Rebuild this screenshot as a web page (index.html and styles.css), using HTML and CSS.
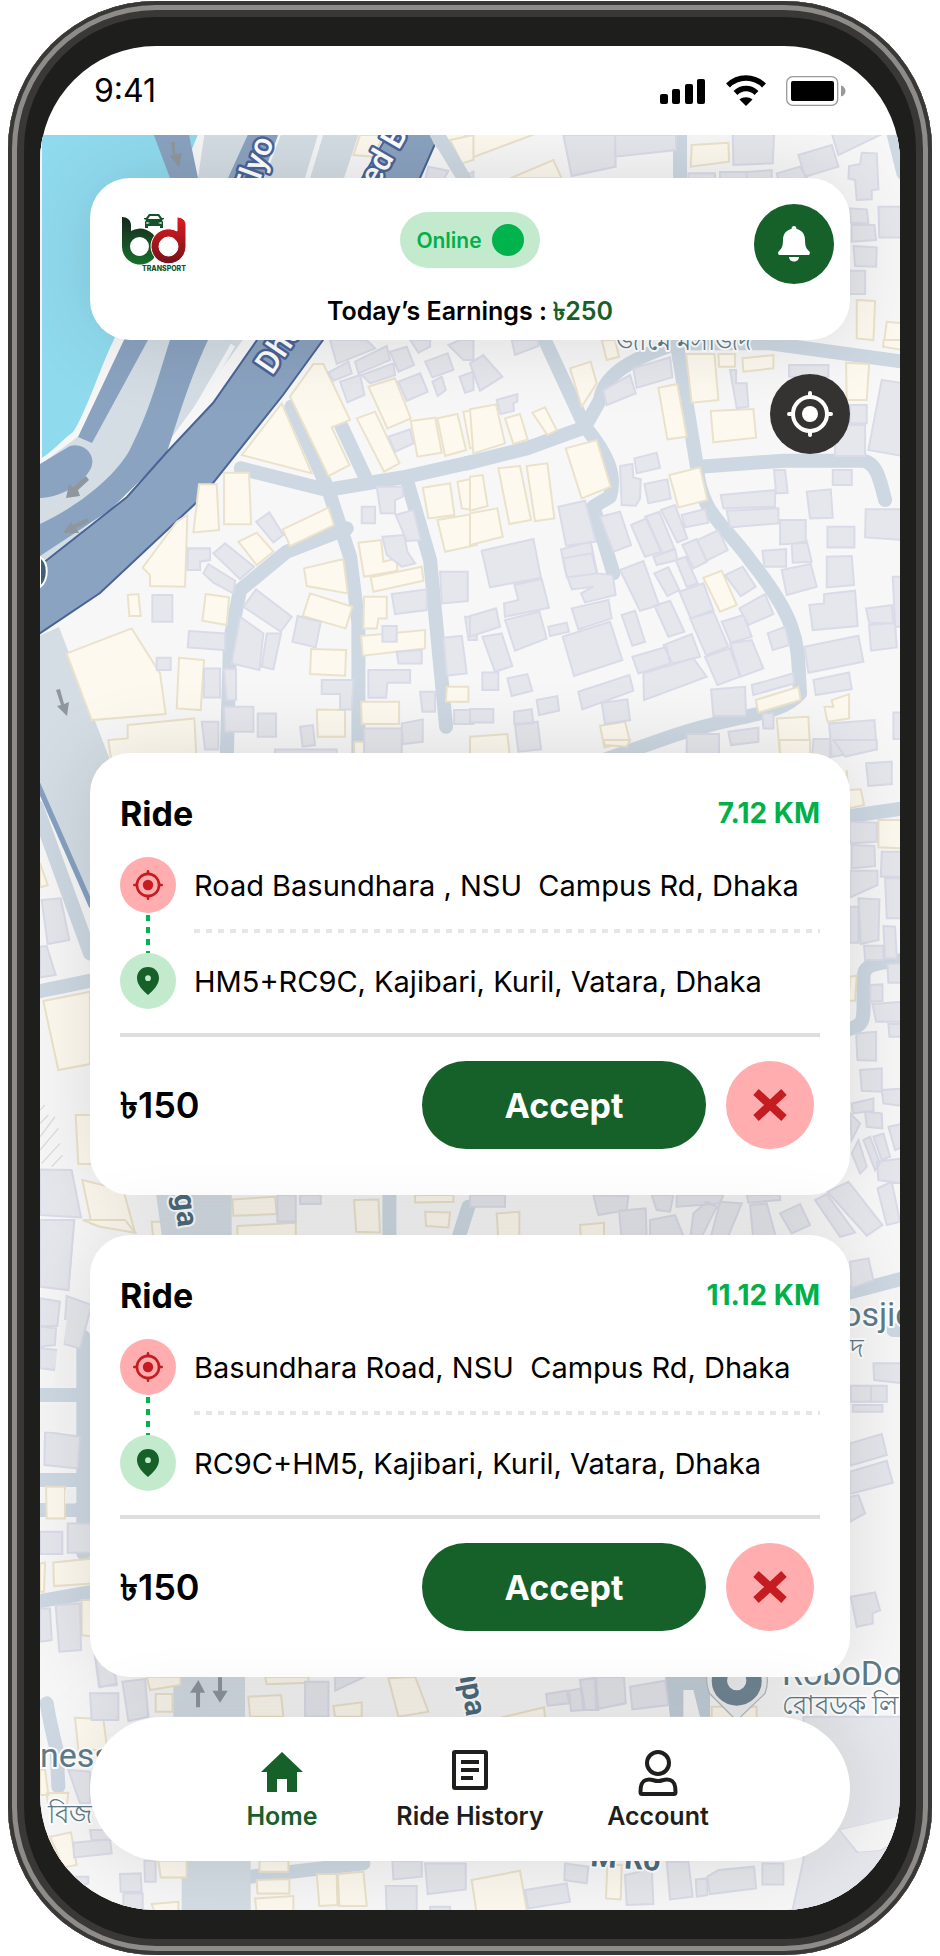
FILE: index.html
```html
<!DOCTYPE html>
<html lang="en">
<head>
    <meta charset="UTF-8">
    <meta name="viewport" content="width=device-width, initial-scale=1.0">
    <title>BD Transport</title>
    <link rel="stylesheet" href="styles.css">
</head>
<body>

<!-- shared icons -->
<svg class="sprite" aria-hidden="true">
    <symbol id="target" viewBox="0 0 46 46">
        <circle cx="23" cy="23" r="8" fill="currentColor"/>
        <circle cx="23" cy="23" r="17" fill="none" stroke="currentColor" stroke-width="4"/>
        <path d="M23 2V6M23 40V44M2 23H6M40 23H44" stroke="currentColor" stroke-width="4" stroke-linecap="round"/>
    </symbol>
    <symbol id="pin" viewBox="0 0 22 28">
        <path fill="currentColor" fill-rule="evenodd" d="M11 0C4.500 0 0 4.800 0 11c0 7 6 12.500 11 17 5-4.500 11-10 11-17C22 4.800 17.500 0 11 0zm0 8.300a2.900 2.900 0 1 1 0 5.800 2.900 2.900 0 0 1 0-5.800z"/>
    </symbol>
    <symbol id="cross" viewBox="0 0 34 32">
        <path d="M3 3L31 29M31 3L3 29" stroke="currentColor" stroke-width="8"/>
    </symbol>
</svg>

<div class="phone">
    <div class="screen">

        <div class="status-bar">
            <span class="time">9:41</span>
            <div class="status-icons">
                <svg width="46" height="30" viewBox="0 0 46 30">
                    <rect x="0" y="18" width="8" height="10" rx="2"/>
                    <rect x="12" y="13" width="8" height="15" rx="2"/>
                    <rect x="25" y="8" width="8" height="20" rx="2"/>
                    <rect x="37" y="3" width="8" height="25" rx="2"/>
                </svg>
                <svg width="40" height="30" viewBox="0 0 40 30">
                    <path d="M2 9.500C12 -0.500 28 -0.500 38 9.500" fill="none" stroke="#000" stroke-width="5.500"/>
                    <path d="M9.500 17C15.500 11 24.500 11 30.500 17" fill="none" stroke="#000" stroke-width="5.500"/>
                    <path d="M13.500 23.500C17 20.500 23 20.500 26.500 23.500L20 30z"/>
                </svg>
                <svg width="60" height="30" viewBox="0 0 60 30">
                    <rect x="0.700" y="0.700" width="51" height="28.600" rx="6" fill="none" stroke="#999" stroke-width="1.300"/>
                    <rect x="5" y="5" width="43" height="20" rx="2"/>
                    <path d="M55 9.500C61 11 61 19 55 20.500z" fill="#999"/>
                </svg>
            </div>
        </div>

        <main class="map-area">
            <svg class="map" viewBox="40 135 860 1775" preserveAspectRatio="xMidYMin slice" aria-hidden="true">
                <!-- lake, flyover and ramps -->
                <path class="water" d="M40 130H202L116 340C100 372 88 415 74 434 62 442 52 456 40 461Z"/>
                <path class="ramp" d="M205 130H360L330 220 170 440 40 575V465L80 435 124 340 198 178Z"/>
                <path class="highway" d="M152 130H188L198 178 199 260 170 178Z"/>
                <path class="gap-line" d="M280 130L262 178M322 130L304 190M233 345L178 440"/>
                <path class="highway" d="M250 130H280L262 178 148 340 92 443 78 437 124 340 228 178Z"/>
                <path class="highway" d="M170 340H208C185 390 175 430 166 455L110 510 40 556V524C75 508 120 475 133 443 152 405 160 370 170 340Z"/>
                <path class="highway" d="M40 464L70 446C84 442 98 456 90 470 82 484 60 498 40 498Z"/>
                <path class="highway edged" d="M392 128L362 178 257 340 213 403 167 452 127 497 47 560 30 570V640L100 593 197 502 213 483 283 395 323 340 420 178 442 128Z"/>
                <path class="ramp" d="M59 627L110 760V920L30 730V640Z"/>
                <path class="arrow" d="M171 142H175V154L182 153 179 167 170 156 173 155ZM86 476L89 480 78 490 80 496 66 498 69 484 73 487ZM87 518L89 522 76 528 79 533 63 533 71 522 73 525ZM56 690L60 689 64 704 69 702 67 716 57 706 61 705Z"/>
                <path d="M40 557C49 562 49 580 40 587Z" fill="#3f5f72" stroke="#fff" stroke-width="2"/>

                <!-- top strip, right of the flyover -->
                <g transform="translate(470) scale(.3334)">
                    <path class="road" d="M630 400V540M1270 400L1300 520"/>
                    <path class="cream" d="M0 400H200L0 475ZM120 535L250 480 275 535ZM665 435L775 428 777 485 662 500ZM1160 900L1215 903 1210 1020 1160 1015ZM1250 965L1300 970V1045L1240 1040ZM-120 400L-10 400-60 465-100 440Z"/>
                    <path class="lav" d="M280 405H435L437 500 305 528ZM435 405H618V450L435 470ZM788 400L912 403 908 490 790 495ZM985 465L1085 435 1105 500 1005 530ZM1085 400H1240L1105 465ZM1175 458L1220 460 1225 568 1205 570V598L1160 600 1155 540 1135 535 1137 498 1170 492ZM1140 625L1190 628 1195 670 1142 668ZM1145 675L1213 675 1218 720 1145 725ZM1225 620H1300V712H1228ZM1150 738L1220 742 1218 800 1155 798ZM1138 812H1185V882H1138ZM750 516H830V540H750ZM830 516L905 510V540H830ZM655 520H735V540H655ZM920 520L990 500 1015 540H925Z"/>
                </g>
                <g transform="scale(.3334)">
                    <path class="cream" d="M1080 405H1150L1120 470 1060 465ZM1350 420L1420 405V480L1385 490Z"/>
                    <path class="lav" d="M1285 500L1345 512 1330 540H1275ZM1370 540L1420 515V540Z"/>
                    <path class="road" d="M1310 400L1395 540"/>
                </g>

                <!-- left half above the ride cards -->
                <g transform="translate(0 340) scale(.3334)">
                    <path class="road" d="M722 385L980 450 1220 410 1420 365M874 200L985 450 1050 650 1075 850V1260M1025 260L1095 410M1220 420L1290 660 1338 1160M1040 565L860 635 720 750 690 900 680 1260"/>
                    <path class="cream" d="M725 345L845 190 935 400ZM870 170L940 72H970L1050 240 995 262 1048 375 985 408ZM1105 140L1185 115 1232 235 1162 265ZM1070 235L1125 215 1198 370 1152 395ZM1232 243L1305 233 1325 338 1252 350ZM1312 235L1372 222 1398 330 1335 348ZM1390 215L1430 208V320L1410 325ZM597 433L650 433 657 570 580 577ZM672 398H747L753 553H672ZM562 525L555 740 450 738 450 705 428 683 530 545ZM715 605L770 578 820 635 770 675ZM848 568L985 503 1002 555 870 618ZM912 685L1030 657 1043 760 920 738ZM930 760L1057 800 1037 865 908 828ZM1268 443L1350 430 1363 525 1285 535ZM1372 425L1420 415V510L1385 505ZM1312 540L1430 520V615L1335 635ZM1075 608L1143 600 1150 665 1190 655 1192 692 1092 710ZM1112 712L1265 680 1270 722 1120 755ZM1092 770H1160V835H1135L1130 865H1090ZM1083 888L1275 870V925L1088 947ZM200 940L395 865 480 1000 497 1122 275 1140ZM383 765L415 762 422 828 388 828ZM617 762L687 772 680 855 607 842ZM537 953L612 960 602 1110 530 1105ZM933 927L1038 930 1035 1007 930 1002ZM950 1108L1035 1110V1190H953ZM1083 1085H1197V1152H1085ZM383 1155L583 1135 590 1270H335L325 1200 383 1195ZM1340 1040H1405V1085H1337ZM1062 1205H1118V1270H1062Z"/>
                    <path class="lav" d="M990 0H1100L1125 25 1010 72ZM985 98L1045 65 1055 100 1000 122ZM1065 65L1160 18 1170 60 1075 100ZM1085 105L1180 70 1185 105 1110 130ZM1020 125L1080 105 1093 165 1042 187ZM1170 35L1220 20 1242 75 1195 95ZM1195 125L1260 100 1283 155 1220 183ZM1275 65L1343 40 1360 90 1297 112ZM1230 0H1290V20L1255 38ZM1345 15L1380 0H1420V60L1390 60ZM1297 125L1325 110 1337 150 1313 168ZM1378 110L1420 95V150L1395 158ZM1165 290L1230 268 1240 310 1185 335ZM1130 440H1208V470L1185 480V520H1142ZM1085 500H1125V550H1085ZM1187 525L1240 510 1262 600 1220 603ZM768 545L808 517 850 585 820 607ZM640 640L675 610 762 680 720 717ZM610 700L625 672 705 722 700 760 640 728ZM563 625H630V660L600 665V690H562ZM457 765H517V845H457ZM730 800L768 748 875 830 842 875ZM720 830L790 880 778 990 695 970ZM800 880L843 880 820 988 785 980ZM893 828L962 845 947 922 877 905ZM567 873L675 880V930L563 922ZM470 953H512V990H470ZM612 985H660V1072H612ZM672 987H708V1080H680ZM672 1100H760V1175H675ZM773 1120H828V1190H773ZM605 1145L655 1145V1228H615ZM900 1160L938 1155 945 1215 908 1220ZM825 1228H1010V1270H825ZM965 1020H1060L1055 1108H1020V1062H965ZM1105 990H1230V1028H1162L1158 1073H1105ZM1147 590L1212 585 1222 635 1245 670 1205 680 1160 645ZM1175 762L1280 748V810L1185 822ZM1147 858H1190V905H1147ZM1190 935L1265 930V970H1195ZM1320 695H1403V783L1325 790ZM1330 893L1385 887 1400 1000 1340 1007ZM1260 1055H1305V1115H1267ZM1092 1165H1205V1270H1092ZM1205 1150L1268 1138V1205L1208 1212ZM1395 830H1430V900H1405ZM1362 1110H1420V1152H1362Z"/>
                </g>

                <!-- right half above the ride cards -->
                <g transform="translate(470 340) scale(.3334)">
                    <path class="road" d="M-10 370L170 325 350 260M215 -20L345 260 390 180C400 110 470 60 620 10H900L1300 65M345 260C410 340 440 400 420 470L370 500 400 600 430 700M620 10L680 375C690 520 760 550 840 660 1000 860 980 920 990 1060 930 1130 800 1120 600 1190L400 1260M690 380L940 362 1180 362C1220 370 1230 420 1245 480"/>
                    <path class="cream" d="M300 85L362 65 380 130 335 200ZM395 0H435L447 50 410 60ZM565 143L622 132 650 290 592 298ZM648 42H733L745 180 665 188ZM745 42H795V80H747ZM817 55L910 45V85L820 95ZM1128 68L1197 72 1190 180H1130ZM722 213L850 207 858 293 730 307ZM1240 0H1300V30L1240 20ZM0 208L78 193 105 310 10 340ZM105 235L150 222 173 298 130 312ZM187 218L225 202 260 270 232 285ZM287 325L380 300 422 440 335 475ZM85 385L150 378 183 540 118 552ZM170 378L232 370 253 535 195 543ZM0 410L38 405 53 498 0 512ZM0 520L82 505 98 590 0 615ZM598 405L690 382 712 480 625 502ZM700 713L755 692 800 795 750 815ZM857 1080L985 1040 992 1080 865 1118ZM1085 1080L1137 1062V1135L1072 1145 1063 1100H1090ZM390 1157L465 1145 480 1205 403 1222ZM920 1135L1015 1130 1022 1270H932ZM0 1190L112 1182 122 1270H0Z"/>
                    <path class="lav" d="M0 70L40 45 97 110 30 152ZM125 0H205V18L135 45ZM400 150L480 105 497 160 410 195ZM490 85L600 52 607 112 500 143ZM957 75H1075V110H957ZM780 90H798V130L830 130 835 200 800 205ZM1235 120L1300 130V348L1195 330ZM1140 195H1190V250H1140ZM1095 255H1185V348H1095ZM80 180L142 162V185L130 190 132 212 92 222ZM493 355L560 338 570 383 500 400ZM450 378L487 372 490 412 512 418 510 475 497 497 455 495ZM523 432L592 418 602 475 535 490ZM752 465L915 450V500L760 505ZM770 512L925 505V550L780 562ZM912 390H945L953 458 918 460ZM1088 390H1145V435H1088ZM1010 455L1082 448 1088 533 1020 535ZM930 540H1007V608L930 613ZM1187 508H1300V600L1185 592ZM1072 560H1153V622H1072ZM265 500L345 482 378 605 288 617ZM390 530L450 515 483 615 430 635ZM483 555L530 535 575 635 525 650ZM525 530L568 515 613 625 575 640ZM573 510L615 495 652 595 622 607ZM635 525L705 507 715 548 645 562ZM550 650L615 628 622 660 560 675ZM637 615L680 597 710 665 670 685ZM682 600L745 570 773 630 710 662ZM877 632L948 627V680H883ZM965 612L1010 603 1025 665 968 668ZM935 690L1022 672 1040 740 950 765ZM1070 650L1145 648 1152 735 1070 742ZM35 632L190 597 213 713 60 742ZM273 628L362 605 382 700 428 705 437 765 345 787 333 760 370 740 305 748 285 690ZM280 655L365 640 380 700 290 712ZM133 735L215 717 237 803 105 830 102 790 145 780ZM450 690L520 663 567 795 510 812ZM553 700L595 682 628 750 592 768ZM617 660L647 650 683 730 650 740ZM765 705L818 680 857 740 812 768ZM628 755L700 730 730 810 662 835ZM1018 795L1062 790V762L1155 752 1163 858 1028 870ZM1188 805L1265 795 1270 850 1197 848ZM1268 710H1300V860H1275ZM0 828L78 805 90 860 0 890ZM105 840L208 815 230 895 135 932ZM305 805L415 780 425 835 325 868ZM235 860L290 848 297 875 240 888ZM455 825L495 812 525 905 487 917ZM553 797L600 782 643 875 595 890ZM660 835L730 815 775 920 708 945ZM755 845L820 825 845 890 782 908ZM808 805L885 762 910 822 835 855ZM893 880L945 860 958 915 908 930ZM1197 855L1275 848 1280 922 1203 932ZM278 890L420 845 457 960 312 1008ZM37 890L95 880 127 978 75 995ZM580 915L665 882 690 950 607 970ZM487 950L590 920 600 970 505 1000ZM520 1000L670 955 710 1010 522 1080ZM705 950L780 925 810 1010 742 1035ZM780 910L845 900 880 985 812 1010ZM1003 920L1165 887 1180 965 1015 998ZM37 997H85V1050H37ZM112 1015L172 1002 187 1052 125 1068ZM325 1055L478 1005 490 1052 337 1108ZM723 1048L825 1040 828 1128H730ZM845 1035L970 1000 972 1030 850 1065ZM1030 1020L1137 997 1145 1047 1037 1065ZM0 1107H70V1147H0ZM200 1080L262 1068 267 1112 207 1125ZM395 1088L472 1078 480 1140 405 1152ZM132 1115L185 1107 190 1150H133ZM135 1155L203 1145 213 1228 145 1235ZM877 1120H910V1165H880ZM650 1182H747V1270H650ZM775 1175L865 1163V1205L783 1215ZM1077 1150L1213 1140 1220 1228 1085 1250ZM1270 1117H1300V1197H1270ZM1030 1197H1080V1270H1025Z"/>
                </g>

                <!-- either side of the first card -->
                <g transform="translate(0 740) scale(.3334)">
                    <path class="ramp" d="M110 0H270V500L120 130Z"/>
                    <path class="road" d="M110 200L270 640M110 755L280 720"/>
                    <path class="line-road" d="M110 125L275 500"/>
                    <path class="cream" d="M120 370L143 435 120 442ZM130 783L270 755V972L175 990ZM227 1125H280V1272H235ZM247 1320L370 1350 405 1478 275 1452ZM697 1378L825 1370 830 1422 700 1427ZM712 1458L887 1448V1500H712ZM1062 1380L1135 1378 1140 1477 1068 1475ZM1245 1365H1360V1385L1245 1387ZM1275 1415L1350 1417 1345 1462 1278 1458ZM455 1445H512V1500H460Z"/>
                    <path class="lav" d="M125 480L182 475 208 600 143 612ZM120 620L140 618 167 705 120 712ZM120 1288L215 1290 243 1432 120 1425ZM120 1440L223 1440 205 1650 120 1630ZM832 1365H887V1445H832ZM900 1365H962V1392H900Z"/>
                    <path class="ramp" d="M465 1340H695V1520H490Z"/>
                    <path class="road" d="M1168 1340V1520"/>
                    <path class="hatch" d="M120 1110L135 1095M120 1150L145 1125M120 1190L165 1130M120 1230L175 1165M125 1270L180 1210M155 1280L188 1245"/>
                </g>
                <g transform="translate(470 740) scale(.3334)">
                    <path class="road" d="M1130 230L1300 205M1130 870C1190 850 1180 850 1180 720 1180 680 1190 670 1300 660M-40 1510L-5 1400"/>
                    <path class="cream" d="M400 0H480L470 20 405 15ZM1130 90V150L1172 148 1182 195 1138 205ZM1225 240H1300V325L1225 322ZM1140 710L1160 707 1155 782H1135ZM80 1420L148 1415V1500H85ZM330 1455L402 1448V1500H333ZM928 0H1020V50H930Z"/>
                    <path class="lav" d="M1090 0H1220V28L1125 50ZM1188 70L1265 65V132L1195 138ZM1140 245L1220 248V305L1140 310ZM1145 315L1213 318 1215 378 1145 385ZM1235 335H1300V410H1232ZM1140 392H1222V435L1140 472ZM1245 415H1300V535H1250ZM1165 475L1228 478 1225 600 1172 612ZM1140 500H1165V608H1140ZM1240 558L1275 560 1280 655H1245ZM1182 617H1240V660H1185ZM1200 735L1237 733V782L1200 785ZM1207 792L1300 785V845H1218ZM1252 672L1300 670V728H1255ZM1255 852H1300V890H1258ZM1158 880L1218 875V962L1162 960ZM1170 990L1235 985V1055L1175 1052ZM1235 1050L1300 1045V1098L1240 1090ZM1145 1090L1210 1075V1112L1148 1120ZM1185 1115L1235 1120 1237 1165 1190 1160ZM1140 1120L1170 1150 1145 1200ZM1145 1240L1165 1200 1190 1280 1170 1300ZM1180 1200L1200 1190 1230 1270 1215 1290ZM1210 1190L1240 1180 1260 1250 1235 1260ZM1255 1160L1300 1150V1220L1275 1230ZM1220 1265L1300 1255V1330L1225 1320ZM1035 1380L1070 1362 1155 1478 1110 1490ZM1072 1355L1135 1325 1237 1455 1190 1487ZM1222 1345L1265 1325 1290 1445 1250 1455ZM930 1420L990 1392 1020 1455 965 1480ZM370 1365L475 1368 470 1410 385 1425ZM447 1412L527 1405 530 1500H455ZM540 1440L615 1425 645 1500H540ZM0 1365H105V1400H0ZM545 1365H610L600 1415 560 1410ZM620 1365H760L750 1390 620 1400ZM670 1420L710 1385 740 1400 690 1500H660ZM750 1385L815 1390 770 1500H720ZM840 1395L890 1390 920 1500H850ZM830 1365H930V1380L835 1388Z"/>
                </g>

                <!-- either side of the second card -->
                <g transform="translate(0 1220) scale(.3334)">
                    <path class="road" d="M250 350V1000M120 525H260M120 780H260M120 870H260M110 1145L280 1115"/>
                    <path class="cream" d="M138 800H195V895H140ZM120 1030L135 1028 132 1115H120ZM160 1027L280 1015V1090L162 1098ZM245 1140H280V1250L245 1245ZM248 0H375L405 38 300 20Z"/>
                    <path class="lav" d="M120 0H222L205 210 120 200ZM200 228L275 255 240 385 190 372ZM120 235L180 245 172 318H120ZM120 320L168 325 165 375 120 380ZM120 385L177 390 165 450 120 445ZM135 635L240 650 233 745 133 735ZM120 935H187V1002H120ZM203 910H275V998H203ZM120 1165L150 1165 155 1260 120 1265ZM167 1155L240 1150 243 1290 178 1295ZM283 1295L340 1340 350 1395 297 1400Z"/>
                    <path class="bare" d="M180 300H200L190 380 222 385 215 500H160ZM120 555L215 550 212 635H120ZM195 810H225V850H195Z"/>
                </g>
                <g transform="translate(470 1220) scale(.3334)">
                    <path class="road" d="M1130 220L1300 175M1270 330H1300"/>
                    <path class="lav" d="M1140 125L1195 115 1210 180 1145 205ZM1210 430H1300V490L1212 480ZM1142 497H1250V545H1142ZM1203 497H1250V545H1203ZM1148 555H1237V575H1148ZM1140 670L1235 642 1250 705 1140 737ZM1140 755L1250 722 1268 788 1140 822ZM1140 830L1165 825 1185 880 1140 905ZM1142 1130L1215 1117 1230 1170 1207 1180 1208 1210 1160 1220Z"/>
                </g>

                <!-- around the bottom menu -->
                <g transform="translate(0 1650) scale(.3334)">
                    <path class="road" d="M140 160C150 220 160 260 170 300L175 410M750 680L1090 640"/>
                    <path class="ramp" d="M520 80H735V200H520ZM545 630H752V790H545Z"/>
                    <path class="cream" d="M440 80H542V105L450 120ZM467 132H518V185H467ZM225 203L310 207 322 300H235ZM795 80H925V98L800 103ZM745 140L843 135 850 200H750ZM1000 168L1085 157V200H1005ZM1165 85L1245 80 1285 185 1195 200ZM120 360L135 358 145 435H120ZM140 430L205 428 200 470H145ZM150 560L213 547 230 645 190 652ZM475 632H560V682H482ZM455 762L535 755V790H465ZM778 632H865V665H778ZM770 690L868 687V730H772ZM765 745L880 738V790H770ZM950 672L1010 672 1012 765 958 768ZM1013 672L1090 665 1100 768H1018Z"/>
                    <path class="lav" d="M285 0L345 75 350 100 300 112 290 40ZM270 130H355V210H275ZM367 95L435 87 445 200 385 213ZM915 95H985V200H915ZM1005 80H1095L1005 122ZM270 540H335V570H275ZM220 578L330 568 335 610 222 622ZM205 360L270 365V460H240ZM433 632H467V695H435ZM360 672L422 670 425 725H362ZM370 730H428V790H370ZM1177 632H1265V680L1180 688ZM1275 640H1397V718L1283 732ZM1157 708H1250V790H1160ZM1290 770H1350V790H1290ZM205 680H265V700L240 710Z"/>
                    <path class="arrow" d="M595 90L615 128H600V172H588V128H570ZM660 158L683 122H666V82H654V122H637Z"/>
                </g>
                <g transform="translate(470 1650) scale(.3334)">
                    <path fill="#c4d0da" d="M585 80H720V200H690L670 120H640V200H600Z"/>
                    <path class="cream" d="M85 205L222 172 225 205ZM725 170H860V205H725ZM5 690L150 662 172 790H20ZM412 645H455L452 748 408 745Z"/>
                    <path class="lav" d="M228 132L290 122 298 160 233 167ZM297 122L335 115 345 180 303 183ZM330 90L378 83 385 180H340ZM375 80H462L467 160 378 178ZM480 110L585 92 595 165 487 178ZM1000 200H1300V500L1110 540 1160 605 1230 600 1300 560V790H965L1000 630ZM590 635H655L668 740 600 748ZM677 688L710 685 712 735 680 740ZM712 680L745 660 852 650 858 715 720 732ZM877 640H940V703H877ZM165 720L290 700 300 755 175 775ZM285 640L355 650 350 700 283 690ZM465 675L510 665 545 650 550 762 470 765Z"/>
                    <path class="bare" d="M1110 540L1300 497V560L1230 600 1165 605Z"/>
                    <path d="M800 212L718 130C690 60 740 0 800 0S910 60 885 130Z" fill="#eef0f1" stroke="#b9bec2" stroke-width="4"/>
                    <circle cx="800" cy="92" r="52" fill="none" stroke="#738896" stroke-width="46"/>
                </g>

                <!-- place names -->
                <g class="road-name">
                    <text transform="translate(254 197) rotate(-70)">Flyo</text>
                    <text transform="translate(377 188) rotate(-60)">ed B</text>
                    <text transform="translate(272 376) rotate(-56)">Dhaka</text>
                </g>
                <g class="street-name">
                    <text transform="translate(172 1178) rotate(83)">nga</text>
                    <text transform="translate(458 1668) rotate(80)">npa</text>
                    <text transform="translate(590 1866) rotate(4)">M Ro</text>
                </g>
                <g class="place-name">
                    <text x="842" y="1326">osjid</text>
                    <text x="782" y="1685">RoboDoc</text>
                    <text x="40" y="1767">ness</text>
                    <text class="bn" x="616" y="350">জামে মসজিদ</text>
                    <text class="bn" x="850" y="1357">দ</text>
                    <text class="bn" x="782" y="1714">রোবডক লি</text>
                    <text class="bn" x="48" y="1823">বিজ</text>
                </g>
            </svg>

            <header class="top-card">
                <div class="top-row">
                    <svg class="logo" width="64" height="58" viewBox="0 0 64 58" role="img" aria-label="BD Transport">
                        <defs>
                            <linearGradient id="green" x1="0" y1="0" x2="0" y2="1">
                                <stop offset="0" stop-color="#16261d"/><stop offset="1" stop-color="#17702b"/>
                            </linearGradient>
                            <linearGradient id="red" x1="0" y1="0" x2="0" y2="1">
                                <stop offset="0" stop-color="#e01b22"/><stop offset="1" stop-color="#74121a"/>
                            </linearGradient>
                        </defs>
                        <path fill="url(#green)" fill-rule="evenodd" d="M0 3C5 3 9 6 9 11V17A18 18 0 1 1 0 33ZM17.500 23A9.500 9.500 0 1 0 17.500 42 9.500 9.500 0 0 0 17.500 23Z"/>
                        <path fill="url(#red)" stroke="#fff" stroke-width="1" fill-rule="evenodd" d="M55 3C60 3 64 6 64 11V33A17.500 17.500 0 1 1 55 17ZM46.500 23A9.500 9.500 0 1 0 46.500 42 9.500 9.500 0 0 0 46.500 23Z"/>
                        <path fill="#14522a" fill-rule="evenodd" d="M27 0H37L40 4H42V5L40 6 41 8V14H38V12H26V14H23V8L24 6 22 5V4H24ZM28 2L26 5H38L36 2ZM24.500 8V10L28 9ZM39.500 8V10L36 9Z"/>
                        <text x="64" y="57" text-anchor="end">TRANSPORT</text>
                    </svg>
                    <label class="online">Online <input type="checkbox" checked></label>
                    <button class="round-btn bell" aria-label="Notifications">
                        <svg width="34" height="36" viewBox="0 0 34 36" fill="#fff">
                            <path d="M17 0c1.500 0 2.500 1 2.500 3 5.500 1.200 8.500 5.500 8.500 10.500 0 7 1.500 9.500 4 11.500 1.500 1.500 1 4-.8 4H2.800C1 29 .500 26.500 2 25c2.500-2 4-4.500 4-11.500C6 8.500 9 4.200 14.500 3c0-2 1-3 2.500-3z"/>
                            <path d="M12 31h10c0 6-10 6-10 0z"/>
                        </svg>
                    </button>
                </div>
                <p class="earnings">Today’s Earnings : <span>৳250</span></p>
            </header>

            <button class="round-btn locate" aria-label="My location">
                <svg width="46" height="46"><use href="#target"/></svg>
            </button>

            <section class="rides">
                <article class="ride-card">
                    <div class="ride-head">
                        <h2>Ride</h2>
                        <span class="distance">7.12 KM</span>
                    </div>
                    <div class="route">
                        <span class="spot from"><svg width="30" height="30"><use href="#target"/></svg></span>
                        <p>Road Basundhara , NSU  Campus Rd, Dhaka</p>
                        <span class="link-line"></span>
                        <span class="dash-line"></span>
                        <span class="spot to"><svg width="22" height="28"><use href="#pin"/></svg></span>
                        <p>HM5+RC9C, Kajibari, Kuril, Vatara, Dhaka</p>
                    </div>
                    <div class="ride-foot">
                        <strong class="price">৳150</strong>
                        <button class="accept">Accept</button>
                        <button class="reject" aria-label="Reject"><svg width="34" height="32"><use href="#cross"/></svg></button>
                    </div>
                </article>

                <article class="ride-card">
                    <div class="ride-head">
                        <h2>Ride</h2>
                        <span class="distance">11.12 KM</span>
                    </div>
                    <div class="route">
                        <span class="spot from"><svg width="30" height="30"><use href="#target"/></svg></span>
                        <p>Basundhara Road, NSU  Campus Rd, Dhaka</p>
                        <span class="link-line"></span>
                        <span class="dash-line"></span>
                        <span class="spot to"><svg width="22" height="28"><use href="#pin"/></svg></span>
                        <p>RC9C+HM5, Kajibari, Kuril, Vatara, Dhaka</p>
                    </div>
                    <div class="ride-foot">
                        <strong class="price">৳150</strong>
                        <button class="accept">Accept</button>
                        <button class="reject" aria-label="Reject"><svg width="34" height="32"><use href="#cross"/></svg></button>
                    </div>
                </article>
            </section>

            <nav class="menu">
                <a href="#home" class="active">
                    <svg width="48" height="48" viewBox="0 0 48 48">
                        <path fill="currentColor" d="M24 5L45 25H39V45H29V32H19V45H9V25H3Z"/>
                    </svg>
                    Home
                </a>
                <a href="#history">
                    <svg width="48" height="48" viewBox="0 0 48 48">
                        <rect x="8" y="5" width="32" height="36" rx="1" fill="none" stroke="currentColor" stroke-width="4"/>
                        <path d="M15 15H33M15 23H33M15 31H27" stroke="currentColor" stroke-width="4"/>
                    </svg>
                    Ride History
                </a>
                <a href="#account">
                    <svg width="48" height="48" viewBox="0 0 48 48" fill="none" stroke="currentColor" stroke-width="4">
                        <circle cx="24" cy="16" r="11"/>
                        <path d="M8 47C6.500 47 6.500 46 6.500 45 6.500 36 9 32.500 15 32.500 19 32.500 20 34 24 34S29 32.500 33 32.500C39 32.500 41.500 36 41.500 45 41.500 46 41.500 47 40 47Z"/>
                    </svg>
                    Account
                </a>
            </nav>
        </main>
    </div>
</div>

</body>
</html>
```
FILE: styles.css
```css
* {
    box-sizing: border-box;
}
body {
    margin: 0;
    background-color: #fff;
    font-family: Inter, "Liberation Sans", sans-serif;
    color: #000;
}
h2, p {
    margin: 0;
}
button {
    border: none;
    padding: 0;
    font-family: inherit;
    cursor: pointer;
}
svg {
    display: block;
    overflow: visible;
}
.sprite {
    display: none;
}

/* phone body */
.phone {
    margin: 1px 8px;
    padding: 45px 32px;
    border-radius: 148px;
    background-color: #1e1e1c;
    box-shadow: inset 0 0 0 4px #3a3836, inset 0 0 0 9px #8e8c89, inset 0 0 0 16px #3a3836;
}
.screen {
    border-radius: 116px;
    overflow: hidden;
    background-color: #fff;
}
.status-bar {
    display: flex;
    justify-content: space-between;
    align-items: center;
    height: 89px;
    padding: 0 54px;
}
.time {
    font-size: 32px;
}
.status-icons {
    display: flex;
    gap: 20px;
}

/* map */
.map-area {
    position: relative;
    display: flex;
    flex-direction: column;
    padding: 43px 50px 49px;
    background-color: #f7f7f7;
    overflow: hidden;
}
.map {
    position: absolute;
    top: 0;
    left: 0;
    width: 100%;
    height: 100%;
}
.water { fill: #90daee; stroke: #f4f6f7; stroke-width: 4; }
.ramp { fill: #d4dde4; }
.highway { fill: #8aa3c0; }
.edged { stroke: #4a6496; stroke-width: 2; }
.gap-line { fill: none; stroke: #f4f6f7; stroke-width: 5; }
.arrow { fill: #8f979d; }
.road { fill: none; stroke: #cdd8e2; stroke-width: 42; stroke-linecap: round; stroke-linejoin: round; }
.line-road { fill: none; stroke: #86a1c0; stroke-width: 16; }
.cream { fill: #fdf9ee; stroke: #ebe2cb; stroke-width: 6; }
.lav { fill: #e6e7ec; stroke: #dadbe8; stroke-width: 6; }
.bare { fill: #f5f5f6; }
.hatch { fill: none; stroke: #dcdcdf; stroke-width: 4; }
.map text {
    paint-order: stroke;
    stroke-linejoin: round;
    font-family: Roboto, sans-serif;
}
.road-name {
    fill: #fff;
    stroke: #4a6496;
    stroke-width: 5px;
    font-size: 32px;
    font-weight: 500;
}
.street-name {
    fill: #4f6b7b;
    stroke: #fff;
    stroke-width: 4px;
    font-size: 30px;
    font-weight: 700;
}
.place-name {
    fill: #5f7b87;
    stroke: #fff;
    stroke-width: 4px;
    font-size: 34px;
}
.place-name .bn {
    font-size: 26px;
}

/* top card */
.top-card,
.ride-card,
.menu {
    position: relative;
    background-color: #fff;
    box-shadow: 0 0 80px rgba(0, 0, 0, 0.12);
}
.top-card {
    padding: 26px 16px 12px 32px;
    border-radius: 40px;
}
.top-row {
    display: grid;
    grid-template-columns: 1fr auto 1fr;
    align-items: start;
    height: 80px;
}
.logo {
    margin-top: 10px;
}
.logo text {
    font-family: Inter, sans-serif;
    font-size: 7px;
    font-weight: 800;
    fill: #14522a;
}
.online {
    display: flex;
    align-items: center;
    gap: 10px;
    height: 56px;
    margin: 8px 16px 0 0;
    padding: 0 16px;
    border-radius: 28px;
    background-color: #c4eacd;
    color: #00b14b;
    font-size: 21px;
    font-weight: 600;
}
.online input {
    appearance: none;
    width: 32px;
    height: 32px;
    margin: 0;
    border-radius: 50%;
    background-color: #00b34c;
}
.round-btn {
    display: flex;
    align-items: center;
    justify-content: center;
    width: 80px;
    height: 80px;
    border-radius: 50%;
}
.bell {
    justify-self: end;
    background-color: #166029;
}
.earnings {
    margin-top: 10px;
    padding-right: 16px;
    font-size: 25px;
    font-weight: 600;
    line-height: 34px;
    text-align: center;
}
.earnings span {
    color: #166029;
}
.locate {
    position: relative;
    align-self: flex-end;
    margin-top: 34px;
    background-color: #353331;
    color: #fff;
}

/* ride cards */
.rides {
    display: flex;
    flex-direction: column;
    gap: 40px;
    margin-top: 299px;
}
.ride-card {
    padding: 38px 30px 46px;
    border-radius: 40px;
}
.ride-head {
    display: flex;
    align-items: center;
    justify-content: space-between;
    height: 44px;
    margin-bottom: 22px;
}
.ride-head h2 {
    font-size: 34px;
    font-weight: 700;
}
.distance {
    color: #00b14b;
    font-size: 28px;
    font-weight: 700;
}
.route {
    display: grid;
    grid-template-columns: 56px 1fr;
    grid-template-rows: 56px 40px 56px;
    column-gap: 18px;
    align-items: center;
    padding-bottom: 24px;
}
.route p {
    font-size: 29px;
    white-space: pre;
}
.spot {
    display: flex;
    align-items: center;
    justify-content: center;
    width: 56px;
    height: 56px;
    border-radius: 50%;
}
.from {
    background-color: #ffadae;
    color: #c41c20;
}
.to {
    background-color: #c4eacd;
    color: #166029;
}
.link-line {
    justify-self: center;
    align-self: end;
    width: 4px;
    height: 38px;
    background: repeating-linear-gradient(to bottom, #00b34c 0 6px, transparent 6px 12px);
}
.dash-line {
    height: 4px;
    margin-bottom: 4px;
    background: repeating-linear-gradient(to right, #e6e6e6 0 6px, transparent 6px 12px);
}
.ride-foot {
    display: flex;
    align-items: center;
    gap: 20px;
    padding: 24px 6px 0 0;
    border-top: 4px solid #dededc;
}
.price {
    flex: 1;
    padding-top: 6px;
    font-size: 36px;
    font-weight: 600;
}
.accept {
    width: 284px;
    height: 88px;
    border-radius: 44px;
    background-color: #166029;
    color: #fff;
    font-size: 34px;
    font-weight: 700;
}
.reject {
    display: flex;
    align-items: center;
    justify-content: center;
    width: 88px;
    height: 88px;
    border-radius: 50%;
    background-color: #ffadae;
    color: #c41c20;
}

/* bottom menu */
.menu {
    display: grid;
    grid-template-columns: repeat(3, 1fr);
    align-items: center;
    height: 144px;
    margin-top: 40px;
    padding: 0 98px;
    border-radius: 72px;
}
.menu a {
    display: flex;
    flex-direction: column;
    align-items: center;
    gap: 6px;
    color: #1e1e1c;
    font-size: 25px;
    font-weight: 600;
    line-height: 30px;
    text-decoration: none;
    white-space: nowrap;
}
.menu .active {
    color: #166029;
}
```
